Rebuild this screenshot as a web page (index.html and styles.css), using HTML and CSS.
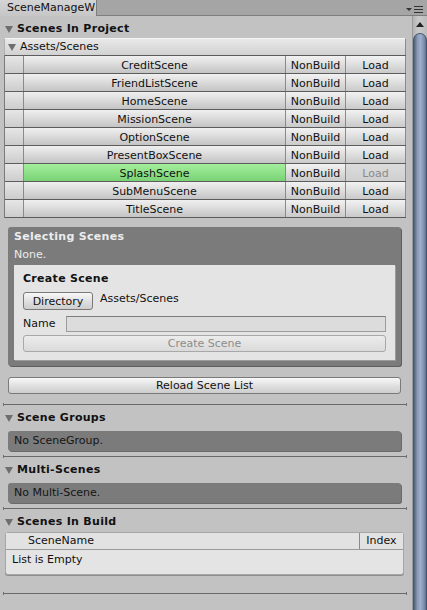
FILE: index.html
```html
<!DOCTYPE html>
<html>
  <head>
    <title>SceneManageWindow</title>
    <link rel="stylesheet" href="styles.css">
  </head>
  <body>
    <div class="tab-bar">
      <div class="tab">SceneManageW</div>
      <div class="tab-menu">
        <span class="menu-arrow"></span>
        <span class="menu-lines"><i></i><i></i><i></i></span>
      </div>
    </div>

    <div class="window">
      <div class="content">
        <div class="section-header"><span class="fold"></span>Scenes In Project</div>

        <div class="folder-bar"><span class="fold"></span>Assets/Scenes</div>

        <div class="scene-table">
          <div class="scene-row">
            <div class="cell check"></div>
            <div class="cell name">CreditScene</div>
            <div class="cell small">NonBuild</div>
            <div class="cell small">Load</div>
          </div>
          <div class="scene-row">
            <div class="cell check"></div>
            <div class="cell name">FriendListScene</div>
            <div class="cell small">NonBuild</div>
            <div class="cell small">Load</div>
          </div>
          <div class="scene-row">
            <div class="cell check"></div>
            <div class="cell name">HomeScene</div>
            <div class="cell small">NonBuild</div>
            <div class="cell small">Load</div>
          </div>
          <div class="scene-row">
            <div class="cell check"></div>
            <div class="cell name">MissionScene</div>
            <div class="cell small">NonBuild</div>
            <div class="cell small">Load</div>
          </div>
          <div class="scene-row">
            <div class="cell check"></div>
            <div class="cell name">OptionScene</div>
            <div class="cell small">NonBuild</div>
            <div class="cell small">Load</div>
          </div>
          <div class="scene-row">
            <div class="cell check"></div>
            <div class="cell name">PresentBoxScene</div>
            <div class="cell small">NonBuild</div>
            <div class="cell small">Load</div>
          </div>
          <div class="scene-row current">
            <div class="cell check"></div>
            <div class="cell name">SplashScene</div>
            <div class="cell small">NonBuild</div>
            <div class="cell small disabled">Load</div>
          </div>
          <div class="scene-row">
            <div class="cell check"></div>
            <div class="cell name">SubMenuScene</div>
            <div class="cell small">NonBuild</div>
            <div class="cell small">Load</div>
          </div>
          <div class="scene-row">
            <div class="cell check"></div>
            <div class="cell name">TitleScene</div>
            <div class="cell small">NonBuild</div>
            <div class="cell small">Load</div>
          </div>
        </div>

        <div class="selecting-box">
          <div class="box-title">Selecting Scenes</div>
          <div class="box-text">None.</div>
          <div class="create-box">
            <div class="create-title">Create Scene</div>
            <div class="dir-row">
              <button type="button" class="unity-button dir-button">Directory</button>
              <span>Assets/Scenes</span>
            </div>
            <div class="name-row">
              <span class="name-label">Name</span>
              <div class="text-field"></div>
            </div>
            <button type="button" class="unity-button wide-button disabled">Create Scene</button>
          </div>
        </div>

        <button type="button" class="unity-button reload-button">Reload Scene List</button>

        <div class="separator first"></div>
        <div class="section-header"><span class="fold"></span>Scene Groups</div>
        <div class="help-box">No SceneGroup.</div>

        <div class="separator"></div>
        <div class="section-header"><span class="fold"></span>Multi-Scenes</div>
        <div class="help-box">No Multi-Scene.</div>

        <div class="separator"></div>
        <div class="section-header"><span class="fold"></span>Scenes In Build</div>
        <div class="build-list">
          <div class="build-head">
            <div class="build-name">SceneName</div>
            <div class="build-index">Index</div>
          </div>
          <div class="build-body">List is Empty</div>
        </div>

        <div class="separator last"></div>
      </div>

      <div class="scrollbar">
        <div class="scroll-up"></div>
        <div class="scroll-thumb"></div>
      </div>
    </div>
  </body>
</html>
```

FILE: styles.css
```css
html,
body {
  margin: 0;
  height: 100%;
  overflow: hidden;
}

body {
  background: #c2c2c2;
  font-family: "DejaVu Sans", Verdana, sans-serif;
  font-size: 11px;
  color: #111;
}

/* window tab strip */
.tab-bar {
  height: 15px;
  background: #a5a5a5;
  border-bottom: 1px solid #7d7d7d;
  display: flex;
  justify-content: space-between;
}

.tab {
  width: 89px;
  padding-left: 7px;
  line-height: 16px;
  height: 16px;
  background: linear-gradient(#d4d4d4, #c6c6c6);
  border-right: 1px solid #7d7d7d;
  white-space: nowrap;
  overflow: hidden;
}

.tab-menu {
  display: flex;
  align-items: center;
  gap: 2px;
  padding: 4px 4px 0 0;
}

.menu-arrow {
  width: 0;
  height: 0;
  border-left: 3px solid transparent;
  border-right: 3px solid transparent;
  border-top: 3px solid #333;
}

.menu-lines {
  display: flex;
  flex-direction: column;
  gap: 2px;
}

.menu-lines i {
  display: block;
  width: 9px;
  height: 1px;
  background: #333;
}

.window {
  display: flex;
  height: 594px;
}

.content {
  flex: 1;
  padding: 5px 6px 0 4px;
}

/* foldout headers */
.fold {
  display: inline-block;
  width: 0;
  height: 0;
  border-left: 4px solid transparent;
  border-right: 4px solid transparent;
  border-top: 7px solid #6e6e6e;
  margin: 0 4px 0 1px;
  vertical-align: -1px;
}

.section-header {
  font-weight: bold;
  letter-spacing: 0.3px;
  line-height: 16px;
  height: 16px;
}

.folder-bar {
  margin-top: 1px;
  height: 17px;
  line-height: 16px;
  background: linear-gradient(#e8e8e8, #d2d2d2);
  border-top: 1px solid #f4f4f4;
  border-right: 1px solid #8a8a8a;
  border-left: 1px solid #b0b0b0;
  box-sizing: border-box;
  padding-left: 2px;
}

/* project scene table */
.scene-table {
  border-left: 1px solid #7a7a7a;
}

.scene-row {
  display: grid;
  grid-template-columns: 19px 1fr 60px 60px;
  height: 18px;
  box-sizing: border-box;
  border-top: 1px solid #5c5c5c;
}

.scene-row:last-child {
  border-bottom: 1px solid #5c5c5c;
  height: 19px;
}

.cell {
  padding-top: 2px;
  line-height: 15px;
  text-align: center;
  background: linear-gradient(#f0f0f0, #d6d6d6 60%, #c4c4c4);
  border-right: 1px solid #8a8a8a;
}

.cell.check {
  background: linear-gradient(#e6e6e6, #cdcdcd);
}

.cell.small {
  background: linear-gradient(#f2f2f2, #dadada 60%, #cacaca);
}

.cell.disabled {
  color: #8a8a8a;
}

.scene-row.current .name {
  background: linear-gradient(#a4ee9c, #8ade84 60%, #7ad274);
}

.scene-row.current .disabled {
  background: linear-gradient(#dcdcdc, #cfcfcf);
}

/* selection panel */
.selecting-box {
  margin: 9px 5px 0 4px;
  padding: 2px 6px 6px;
  background: #7b7b7b;
  border-radius: 3px;
  box-shadow: 1px 1px 0 #5e5e5e;
}

.box-title {
  font-weight: bold;
  letter-spacing: 0.3px;
  color: #ececec;
  line-height: 16px;
}

.box-text {
  color: #ececec;
  line-height: 16px;
  margin-top: 2px;
}

.create-box {
  margin-top: 2px;
  background: #e4e4e4;
  padding: 6px 10px 8px 9px;
  box-shadow: 1px 1px 0 #9a9a9a;
}

.create-title {
  font-weight: bold;
  letter-spacing: 0.3px;
  line-height: 16px;
}

.unity-button {
  font-family: inherit;
  font-size: 11px;
  color: #111;
  background: linear-gradient(#f8f8f8, #dedede 55%, #cdcdcd);
  border: 1px solid #7a7a7a;
  border-radius: 3px;
  padding: 0;
  display: block;
}

.dir-row {
  display: flex;
  align-items: center;
  gap: 7px;
  margin-top: 5px;
}

.dir-button {
  width: 70px;
  height: 18px;
}

.dir-row span {
  margin-top: -5px;
}

.name-row {
  display: flex;
  align-items: center;
  margin-top: 6px;
}

.name-label {
  width: 43px;
  line-height: 16px;
}

.text-field {
  flex: 1;
  height: 16px;
  box-sizing: border-box;
  background: #dcdcdc;
  border: 1px solid #9c9c9c;
  border-top-color: #7c7c7c;
  margin-right: -1px;
}

.wide-button {
  width: calc(100% + 1px);
  height: 17px;
  margin-top: 3px;
}

.wide-button.disabled {
  color: #8c8c8c;
  background: linear-gradient(#ececec, #dadada);
  border-color: #a8a8a8;
}

.reload-button {
  width: calc(100% - 9px);
  margin: 11px 0 0 4px;
  height: 17px;
}

/* horizontal splitter */
.separator {
  margin: 4px -1px 4px -1px;
  height: 3px;
  border-left: 1px solid #707070;
  border-right: 1px solid #707070;
  background: linear-gradient(transparent 1px, #6a6a6a 1px, #6a6a6a 2px, transparent 2px);
}

.separator.first {
  margin-top: 9px;
}

.separator.last {
  margin-top: 17px;
}

.help-box {
  margin: 5px 5px 0 4px;
  height: 20px;
  line-height: 20px;
  padding-left: 6px;
  background: #7b7b7b;
  border-radius: 3px;
  box-shadow: 1px 1px 0 #6a6a6a;
  color: #151515;
}

/* build list */
.build-list {
  margin: 2px 2px 0 1px;
  border: 1px solid #a6a6a6;
  border-radius: 3px;
  background: #e4e4e4;
  box-shadow: 0 1px 0 #8e8e8e;
}

.build-head {
  display: flex;
  height: 16px;
  line-height: 16px;
  border-bottom: 1px solid #9a9a9a;
  background: #e2e2e2;
}

.build-name {
  flex: 1;
  padding-left: 22px;
  border-right: 1px solid #8a8a8a;
}

.build-index {
  width: 43px;
  text-align: center;
}

.build-body {
  height: 24px;
  line-height: 20px;
  padding-left: 6px;
}

/* vertical scrollbar */
.scrollbar {
  width: 15px;
  background: linear-gradient(90deg, #b4b4b4, #cacaca 40%, #bcbcbc);
  border-left: 1px solid #9a9a9a;
  box-sizing: border-box;
  position: relative;
}

.scroll-up {
  height: 16px;
  display: flex;
  justify-content: center;
  align-items: center;
}

.scroll-up::before {
  content: "";
  width: 0;
  height: 0;
  border-left: 4px solid transparent;
  border-right: 4px solid transparent;
  border-bottom: 5px solid #222;
}

.scroll-thumb {
  position: absolute;
  top: 17px;
  left: 0;
  right: 0;
  bottom: -20px;
  border-radius: 7px 7px 0 0;
  background: linear-gradient(90deg, #4e5f7c, #8c9dba 30%, #9eaeca 55%, #7a8cab 85%, #5d6e8c);
  border: 1px solid #4a5670;
}
```
